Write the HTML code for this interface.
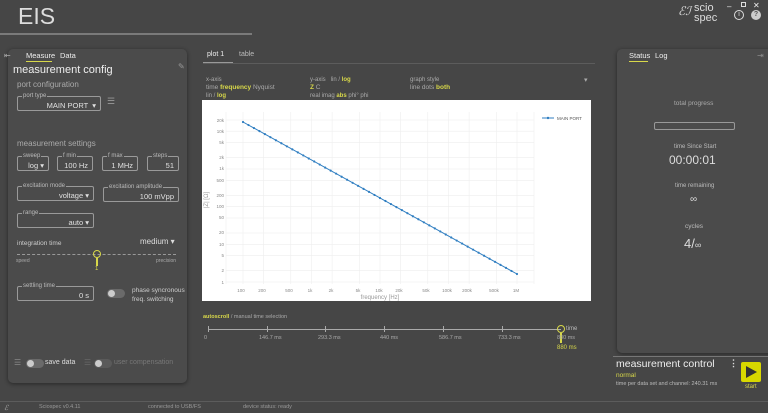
<!DOCTYPE html>
<html><head><meta charset="utf-8"><style>
*{margin:0;padding:0;box-sizing:border-box}
body{width:768px;height:413px;background:#464646;font-family:"Liberation Sans",sans-serif;color:#ccc;position:relative;overflow:hidden}
.a{position:absolute;white-space:nowrap}
.panel{position:absolute;background:#4b4b4b;border-radius:5px;box-shadow:0 1px 4px rgba(0,0,0,.45)}
.box{position:absolute;border:1px solid #9a9a9a;border-radius:2px;height:15px;font-size:7.5px;color:#e0e0e0;text-align:right;padding:4px 4px 0 0}
.box .l{position:absolute;left:4px;top:-5px;background:#4b4b4b;font-size:6px;color:#bbb;padding:0 1px;line-height:8px}
.y{color:#d8d84a}
.tog{position:absolute;width:18px;height:9px;border-radius:5px;background:#6a6a6a}
.tog:before{content:"";position:absolute;left:1px;top:1px;width:7px;height:7px;border-radius:50%;background:#ccc}
</style></head><body>
<div class="a" style="left:18px;top:3px;font-size:23px;color:#ddd">EIS</div>
<div class="a" style="left:0;top:33px;width:252px;height:2px;background:#7a7a7a"></div>
<div class="a" style="left:678px;top:6px;font-size:12px;color:#ddd;font-style:italic;line-height:10px">ℰℐ</div>
<div class="a" style="left:694px;top:3px;font-size:11px;color:#ddd;line-height:10px">scio<br>spec</div>
<div class="a" style="left:727px;top:2px;font-size:8px;color:#eee">–</div>
<div class="a" style="left:741px;top:2px;width:5px;height:5px;border:1px solid #ddd"></div>
<div class="a" style="left:753px;top:1px;font-size:8px;color:#eee">✕</div>
<div class="a" style="left:734px;top:10px;width:10px;height:10px;border:1.3px solid #ddd;border-radius:50%;font-size:7px;text-align:center;line-height:8px;color:#ddd">i</div>
<div class="a" style="left:751px;top:10px;width:10px;height:10px;background:#ccc;border-radius:50%;font-size:7px;text-align:center;line-height:10px;color:#555;font-weight:bold">?</div>

<!-- left panel -->
<div class="panel" style="left:8px;top:49px;width:179px;height:334px"></div>
<div class="a" style="left:4px;top:51px;font-size:8px;color:#aaa">⇤</div>
<div class="a" style="left:26px;top:51px;font-size:7.5px;color:#eee">Measure</div>
<div class="a" style="left:26px;top:61px;width:26px;height:1px;background:#d8d84a"></div>
<div class="a" style="left:60px;top:51px;font-size:7.5px;color:#eee">Data</div>
<div class="a" style="left:178px;top:62px;font-size:8px;color:#999">✎</div>
<div class="a" style="left:13px;top:64px;font-size:11px;color:#eee">measurement config</div>
<div class="a" style="left:17px;top:80px;font-size:8px;color:#aaa">port configuration</div>
<div class="box" style="left:17px;top:96px;width:84px;font-size:7.5px">MAIN PORT &nbsp;▾<span class="l">port type</span></div>
<div class="a" style="left:107px;top:96px;font-size:9px;color:#999">☰</div>
<div class="a" style="left:17px;top:139px;font-size:8px;color:#aaa">measurement settings</div>
<div class="box" style="left:17px;top:156px;width:32px">log ▾<span class="l">sweep</span></div>
<div class="box" style="left:57px;top:156px;width:36px">100 Hz<span class="l">f min</span></div>
<div class="box" style="left:102px;top:156px;width:36px">1 MHz<span class="l">f max</span></div>
<div class="box" style="left:147px;top:156px;width:32px">51<span class="l">steps</span></div>
<div class="box" style="left:17px;top:186px;width:77px">voltage ▾<span class="l">excitation mode</span></div>
<div class="box" style="left:103px;top:187px;width:76px">100 mVpp<span class="l">excitation amplitude</span></div>
<div class="box" style="left:17px;top:213px;width:77px">auto ▾<span class="l">range</span></div>
<div class="a" style="left:17px;top:240px;font-size:6.5px;color:#ccc">integration time</div>
<div class="a" style="left:140px;top:237px;font-size:8px;color:#ddd">medium ▾</div>
<div class="a" style="left:17px;top:254px;width:159px;border-top:1px dashed #999"></div>
<div class="a" style="left:93px;top:250px;width:8px;height:8px;border:1.5px solid #d8d84a;border-radius:50%"></div>
<div class="a" style="left:96px;top:258px;width:1.5px;height:8px;background:#d8d84a"></div>
<div class="a" style="left:95px;top:266px;font-size:6px" ><span class="y">1</span></div>
<div class="a" style="left:16px;top:258px;font-size:5px;color:#aaa">speed</div>
<div class="a" style="left:156px;top:258px;font-size:5px;color:#aaa">precision</div>
<div class="box" style="left:17px;top:286px;width:77px">0 s<span class="l">settling time</span></div>
<div class="tog" style="left:107px;top:289px"></div>
<div class="a" style="left:132px;top:286px;font-size:6.5px;line-height:9px;color:#ccc">phase syncronous<br>freq. switching</div>
<div class="a" style="left:14px;top:358px;font-size:8px;color:#888">☰</div>
<div class="tog" style="left:26px;top:359px"></div>
<div class="a" style="left:45px;top:359px;font-size:7px;color:#ddd">save data</div>
<div class="a" style="left:84px;top:358px;font-size:8px;color:#666">☰</div>
<div class="tog" style="left:94px;top:359px;background:#5a5a5a"></div>
<div class="a" style="left:114px;top:359px;font-size:7px;color:#777">user compensation</div>

<!-- center -->
<div class="a" style="left:207px;top:51px;font-size:7px;color:#eee">plot 1</div>
<div class="a" style="left:203px;top:62px;width:30px;height:1px;background:#999"></div>
<div class="a" style="left:239px;top:51px;font-size:7px;color:#bbb">table</div>
<div class="a" style="left:203px;top:63px;width:392px;height:1px;background:#5c5c5c"></div>
<div class="a" style="left:206px;top:76px;font-size:6px;color:#aaa;line-height:8px">x-axis<br><span style="font-size:6.5px">time <b class="y">frequency</b> Nyquist</span><br>lin / <b class="y">log</b></div>
<div class="a" style="left:310px;top:76px;font-size:6px;color:#aaa;line-height:8px">y-axis &nbsp; lin / <b class="y">log</b><br><span style="font-size:6.5px"><b class="y">Z</b> C</span><br>real imag <b class="y">abs</b> phi° phi</div>
<div class="a" style="left:410px;top:76px;font-size:6px;color:#aaa;line-height:8px">graph style<br><span style="font-size:6.5px">line dots <b class="y">both</b></span></div>
<div class="a" style="left:584px;top:76px;font-size:7px;color:#aaa">▾</div>
<svg class="a" style="left:202px;top:100px" width="389" height="201" viewBox="202 100 389 201">
<rect x="202" y="100" width="389" height="201" fill="#fff"/>
<g stroke="#eee" stroke-width="0.6">
<line x1="226" y1="282" x2="534" y2="282"/><line x1="226" y1="270.6" x2="534" y2="270.6"/><line x1="226" y1="255.6" x2="534" y2="255.6"/><line x1="226" y1="244.3" x2="534" y2="244.3"/><line x1="226" y1="233" x2="534" y2="233"/><line x1="226" y1="218" x2="534" y2="218"/><line x1="226" y1="206.6" x2="534" y2="206.6"/><line x1="226" y1="195.3" x2="534" y2="195.3"/><line x1="226" y1="180.3" x2="534" y2="180.3"/><line x1="226" y1="169" x2="534" y2="169"/><line x1="226" y1="157.6" x2="534" y2="157.6"/><line x1="226" y1="142.6" x2="534" y2="142.6"/><line x1="226" y1="131.2" x2="534" y2="131.2"/><line x1="226" y1="120" x2="534" y2="120"/>
<line x1="243" y1="112" x2="243" y2="284"/><line x1="263.6" y1="112" x2="263.6" y2="284"/><line x1="290.8" y1="112" x2="290.8" y2="284"/><line x1="311.5" y1="112" x2="311.5" y2="284"/><line x1="332.1" y1="112" x2="332.1" y2="284"/><line x1="359.3" y1="112" x2="359.3" y2="284"/><line x1="380" y1="112" x2="380" y2="284"/><line x1="400.6" y1="112" x2="400.6" y2="284"/><line x1="427.8" y1="112" x2="427.8" y2="284"/><line x1="448.5" y1="112" x2="448.5" y2="284"/><line x1="469.1" y1="112" x2="469.1" y2="284"/><line x1="496.3" y1="112" x2="496.3" y2="284"/><line x1="517" y1="112" x2="517" y2="284"/><line x1="534" y1="112" x2="534" y2="284"/><line x1="226" y1="112" x2="226" y2="284"/>
</g>
<g font-size="4.5" fill="#888" text-anchor="end" font-family="Liberation Sans">
<text x="224" y="284">1</text><text x="224" y="272">2</text><text x="224" y="257">5</text><text x="224" y="246">10</text><text x="224" y="234">20</text><text x="224" y="219">50</text><text x="224" y="208">100</text><text x="224" y="197">200</text><text x="224" y="182">500</text><text x="224" y="170">1k</text><text x="224" y="159">2k</text><text x="224" y="144">5k</text><text x="224" y="133">10k</text><text x="224" y="122">20k</text>
</g>
<g font-size="4.5" fill="#888" text-anchor="middle" font-family="Liberation Sans">
<text x="241" y="292">100</text><text x="262" y="292">200</text><text x="289" y="292">500</text><text x="310" y="292">1k</text><text x="331" y="292">2k</text><text x="358" y="292">5k</text><text x="379" y="292">10k</text><text x="399" y="292">20k</text><text x="426" y="292">50k</text><text x="447" y="292">100k</text><text x="467" y="292">200k</text><text x="494" y="292">500k</text><text x="516" y="292">1M</text>
</g>
<text x="380" y="299" font-size="6" fill="#999" text-anchor="middle" font-family="Liberation Sans">frequency [Hz]</text>
<text x="208" y="200" font-size="6" fill="#999" text-anchor="middle" font-family="Liberation Sans" transform="rotate(-90 208 200)">|Z| [Ω]</text>
<line x1="243" y1="122" x2="517" y2="274" stroke="#2f7ec1" stroke-width="1"/>
<line x1="243" y1="122" x2="517" y2="274" stroke="#2f7ec1" stroke-width="2.2" stroke-linecap="round" stroke-dasharray="0 6.266"/>
<line x1="542" y1="118" x2="554" y2="118" stroke="#2f7ec1" stroke-width="1"/><circle cx="548" cy="118" r="1.2" fill="#2f7ec1"/>
<text x="557" y="120" font-size="4.5" fill="#555" font-family="Liberation Sans">MAIN PORT</text>
</svg>
<div class="a" style="left:203px;top:314px;font-size:5.5px;color:#aaa"><b class="y">autoscroll</b> / manual time selection</div>
<div class="a" style="left:208px;top:329px;width:353px;height:1px;background:#aaa"></div>
<div class="a" style="left:208px;top:326px;width:1px;height:6px;background:#aaa"></div>
<div class="a" style="left:267px;top:326px;width:1px;height:6px;background:#aaa"></div>
<div class="a" style="left:325px;top:326px;width:1px;height:6px;background:#aaa"></div>
<div class="a" style="left:384px;top:326px;width:1px;height:6px;background:#aaa"></div>
<div class="a" style="left:443px;top:326px;width:1px;height:6px;background:#aaa"></div>
<div class="a" style="left:502px;top:326px;width:1px;height:6px;background:#aaa"></div>
<div class="a" style="left:557px;top:325px;width:8px;height:8px;border:1.5px solid #d8d84a;border-radius:50%"></div>
<div class="a" style="left:560px;top:333px;width:1.5px;height:10px;background:#d8d84a"></div>
<div class="a" style="left:566px;top:326px;font-size:6px;color:#bbb">time</div>
<div class="a" style="top:335px;left:204px;font-size:5.5px;color:#aaa">0</div>
<div class="a" style="top:335px;left:259px;font-size:5.5px;color:#aaa">146.7 ms</div>
<div class="a" style="top:335px;left:318px;font-size:5.5px;color:#aaa">293.3 ms</div>
<div class="a" style="top:335px;left:380px;font-size:5.5px;color:#aaa">440 ms</div>
<div class="a" style="top:335px;left:439px;font-size:5.5px;color:#aaa">586.7 ms</div>
<div class="a" style="top:335px;left:498px;font-size:5.5px;color:#aaa">733.3 ms</div>
<div class="a" style="top:335px;left:557px;font-size:5.5px;color:#aaa">880 ms</div>
<div class="a" style="top:345px;left:557px;font-size:6px" ><span class="y">880 ms</span></div>

<!-- right panel -->
<div class="panel" style="left:617px;top:49px;width:160px;height:304px"></div>
<div class="a" style="left:629px;top:51px;font-size:7.5px;color:#eee">Status</div>
<div class="a" style="left:629px;top:61px;width:19px;height:1px;background:#d8d84a"></div>
<div class="a" style="left:655px;top:51px;font-size:7.5px;color:#eee">Log</div>
<div class="a" style="left:757px;top:51px;font-size:8px;color:#888">⇥</div>
<div class="a" style="left:674px;top:100px;font-size:6.5px;color:#aaa">total progress</div>
<div class="a" style="left:654px;top:122px;width:81px;height:8px;border:1px solid #999;border-radius:2px"></div>
<div class="a" style="left:674px;top:144px;font-size:6px;color:#bbb">time Since Start</div>
<div class="a" style="left:669px;top:153px;font-size:12px;color:#ddd">00:00:01</div>
<div class="a" style="left:675px;top:183px;font-size:6px;color:#bbb">time remaining</div>
<div class="a" style="left:690px;top:194px;font-size:10px;color:#ddd">∞</div>
<div class="a" style="left:685px;top:223px;font-size:6.5px;color:#bbb">cycles</div>
<div class="a" style="left:684px;top:236px;font-size:13px;color:#ddd">4/<span style="font-size:9px">∞</span></div>
<div class="a" style="left:613px;top:356px;width:155px;height:1px;background:#777"></div>
<div class="a" style="left:616px;top:358px;font-size:10.5px;color:#eee">measurement control</div>
<div class="a" style="left:729px;top:358px;font-size:9px;color:#ddd;font-weight:bold">⋮</div>
<div class="a" style="left:616px;top:372px;font-size:6.5px"><span class="y">normal</span></div>
<div class="a" style="left:616px;top:381px;font-size:5.5px;color:#bbb">time per data set and channel: 240.31 ms</div>
<div class="a" style="left:741px;top:362px;width:20px;height:20px;background:#d8d800;border-radius:2px"></div>
<div class="a" style="left:746px;top:366px;width:0;height:0;border-left:11px solid #333;border-top:6px solid transparent;border-bottom:6px solid transparent"></div>
<div class="a" style="left:745px;top:384px;font-size:6px"><span class="y">start</span></div>

<!-- status bar -->
<div class="a" style="left:0;top:401px;width:768px;height:1px;background:#5c5c5c"></div>
<div class="a" style="left:4px;top:404px;font-size:7px;color:#aaa;font-style:italic">ℰ</div>
<div class="a" style="left:39px;top:404px;font-size:5.5px;color:#999">Sciospec v0.4.11</div>
<div class="a" style="left:148px;top:404px;font-size:5.5px;color:#999">connected to USB/FS</div>
<div class="a" style="left:243px;top:404px;font-size:5.5px;color:#999">device status: ready</div>
</body></html>
